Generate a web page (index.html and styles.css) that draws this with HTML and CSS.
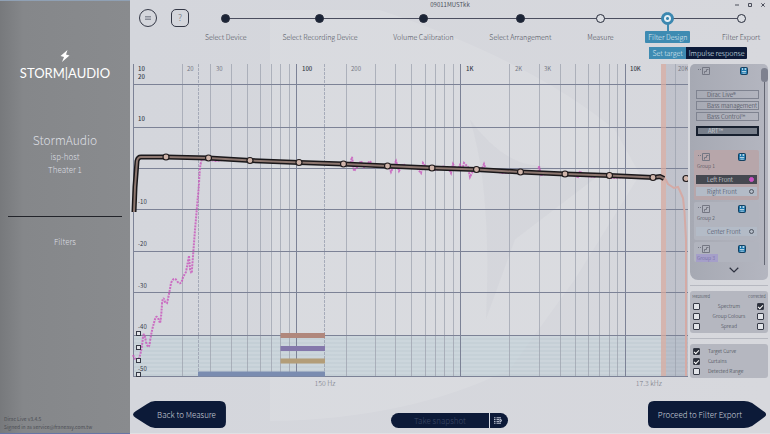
FILE: index.html
```html
<!DOCTYPE html>
<html lang="en">
<head>
<meta charset="utf-8">
<meta name="viewport" content="width=device-width, initial-scale=1">
<title>Dirac Live - Filter Design</title>
<link rel="stylesheet" href="styles.css">
</head>
<body>
<svg class="defs" aria-hidden="true">
  <symbol id="icon-link" viewBox="0 0 12 8"><path d="M0 2.500h1m1 0h1" stroke="currentColor" stroke-width="1"/><path d="M4.500.5h7v7h-7z" fill="none" stroke="currentColor" stroke-width="1"/><path d="M6.500 6.500v-2h2v-2h2" fill="none" stroke="currentColor" stroke-width="1"/></symbol>
  <symbol id="icon-save" viewBox="0 0 8 8"><rect x=".5" y=".5" width="7" height="7" rx="1" fill="#1f78ad" stroke="#17405f"/><path d="M2 1.200h1v1.600H2zM4.600 1.200h1.600v1.600H4.600zM1.800 4.200h4.400v.9H1.800zM2.400 5.800h3.400v.7H2.400z" fill="#e4eef5"/></symbol>
</svg>
<div class="app">
  <aside class="sidebar">
    <div class="brand">
      <svg class="bolt" viewBox="0 0 10 12" aria-hidden="true"><path d="M7.500 0 .5 6l3.500 1L2 12l7.500-6.500L6 4.500z" fill="#fff"/></svg>
      <span class="wordmark">STORM|AUDIO</span>
    </div>
    <div class="device">
      <h1>StormAudio</h1>
      <p>isp-host</p>
      <p>Theater 1</p>
    </div>
    <a class="side-link" href="#filters">Filters</a>
    <p class="about">Dirac Live v3.4.5<br>Signed in as service@franeasy.com.tw</p>
  </aside>

  <main class="main">
    <svg class="backdrop" viewBox="0 0 640 434" preserveAspectRatio="none" aria-hidden="true">
      <path d="M140 10h110q150 50 235 120l25 45-65 105-65 90q-100 50-240 52z" fill="#fff" opacity=".1"/>
      <path d="M340 120Q370 160 400 165L470 175 385 240 356 320Q362 190 340 120z" fill="#8d919b" opacity=".05"/>
    </svg>
    <header class="topbar">
      <div class="titlebar">
        <span class="project">09011MUSTkk</span>
        <span class="window-controls">
          <button aria-label="Minimize"><svg viewBox="0 0 6 6"><path d="M1 3h4"/></svg></button>
          <button aria-label="Maximize"><svg viewBox="0 0 6 6"><path d="M1.500 1.500h3v3h-3z"/></svg></button>
          <button aria-label="Close"><svg viewBox="0 0 6 6"><path d="m1.300 1.300 3.400 3.400m0-3.400L1.300 4.700"/></svg></button>
        </span>
      </div>
      <div class="navrow">
        <button class="round-btn" aria-label="Menu"><svg viewBox="0 0 8 8"><path d="M1 2.500h6M1 4h6M1 5.500h6" stroke="#777b88" stroke-width=".8"/></svg></button>
        <button class="square-btn" aria-label="Help">?</button>
        <ol class="steps">
          <li class="done"><i></i><a href="#device">Select Device</a></li>
          <li class="done"><i></i><a href="#recording">Select Recording Device</a></li>
          <li class="done"><i></i><a href="#volume">Volume Calibration</a></li>
          <li class="done"><i></i><a href="#arrangement">Select Arrangement</a></li>
          <li><i></i><a href="#measure">Measure</a></li>
          <li class="current"><i></i><a href="#design">Filter Design</a>
            <div class="substeps"><a href="#target">Set target</a><a class="dark" href="#impulse">Impulse response</a></div>
          </li>
          <li><i></i><a href="#export">Filter Export</a></li>
        </ol>
      </div>
    </header>

    <div class="workspace">
      <section class="chart" aria-label="Frequency response">
        <svg viewBox="130 62 558 328" role="img" aria-label="Frequency response chart">
          <defs>
            <pattern id="stripes" width="10" height="4" patternUnits="userSpaceOnUse"><path d="M0 1h10" stroke="#dbe2e7" stroke-width="1"/></pattern>
          </defs>
          <rect x="133" y="335" width="555" height="41" fill="#b9c9d2" opacity=".6"/>
          <rect x="133" y="335" width="555" height="41" fill="url(#stripes)" opacity=".6"/>
          <rect x="666" y="64" width="22" height="312" fill="#878ca1" opacity=".28"/>
          <g class="grid-minor">
            <path d="M182.500 64v312M210.500 64v312M231.500 64v312M247.500 64v312M260.500 64v312M271.500 64v312M280.500 64v312M289.500 64v312M346.500 64v312M375.500 64v312M395.500 64v312M411.500 64v312M425.500 64v312M435.500 64v312M444.500 64v312M453.500 64v312M509.500 64v312M539.500 64v312M560.500 64v312M575.500 64v312M588.500 64v312M599.500 64v312M609.500 64v312M617.500 64v312M675.500 64v312"/>
          </g>
          <path class="grid-edge" d="M198.500 64v312M324.500 64v312"/>
          <g class="grid-major">
            <path d="M133.500 64v312M296.500 64v312M460.500 64v312M625.500 64v312"/>
            <path d="M133 84.500h555M133 127.500h555M133 168.500h555M133 209.500h555M133 251.500h555M133 292.500h555M133 335.500h555M133 376.500h555"/>
          </g>
          <rect x="661" y="64" width="5" height="312" fill="#d4a99f" opacity=".75"/>
          <rect x="280.500" y="333" width="44.500" height="5" fill="#b0877c"/>
          <rect x="280.500" y="346" width="44.500" height="5" fill="#8478ab"/>
          <rect x="280.500" y="358.500" width="44.500" height="5" fill="#b39d78"/>
          <rect x="198" y="371.500" width="127" height="5" fill="#7a8cb0"/>
          <path d="M663 178L666 180 668 184 671 186 674 188 678 187 680 191 683 198 684.500 212 686 240V376" fill="none" stroke="#d4aaa5" stroke-width="2"/>
          <path class="measured" d="M133 355 Q136 362 138 360 Q141 356 143 337 Q144 330 146 342 Q149 352 150 341 Q152 329 154 323 Q156 314 158 318 L160 323 Q161 320 162 304 Q163 294 165 302 L167 303 Q169 295 171 283 Q174 276 177 281 Q181 287 183 277 L186 272 Q188 261 189 256 L190 269 Q192 277 192 269 L195 230 199 184 Q200 158 203 159 L216 161 230 159 250 161 299 163"/>
          <path class="measured" d="M343 164L350 165 352 157 354 171 358 166 361 161 364 167 370 161 374 167 380 165 389 166 391 172 396 161 399 171 403 164 408 168 411 168 417 168 421 173 423 163 427 168 437 170 444 166 449 169 451 173 453 164 457 171 460 165 462 170 464 163 468 167 470 177 474 169 481 171 484 164 486 170 495 171 502 173 507 173 515 171 538 174 539 166 541 175 546 174 556 173 572 175 578 177 580 171 584 176 594 177 600 174 612 178 625 177 636 178 650 178"/>
          <path class="target-outline" d="M134 212l1-25 2-26q1-4 4-4h25l42.500 1 42 2.500 48.500 2 44.500 1.500 44 2 44.500 2 44.500 1.500 44 2.500 44.500 2 44.500 1.500 43.500 2 7-1 4 2"/>
          <path class="target" d="M134 212l1-25 2-26q1-4 4-4h25l42.500 1 42 2.500 48.500 2 44.500 1.500 44 2 44.500 2 44.500 1.500 44 2.500 44.500 2 44.500 1.500 43.500 2 7-1 4 2"/>
          <g class="handles">
            <circle cx="166" cy="157" r="3"/><circle cx="208.500" cy="158" r="3"/><circle cx="250" cy="160.500" r="3"/><circle cx="299" cy="162.500" r="3"/><circle cx="343.500" cy="164" r="3"/><circle cx="387.500" cy="166" r="3"/><circle cx="432" cy="168" r="3"/><circle cx="476.500" cy="169.500" r="3"/><circle cx="520.500" cy="172" r="3"/><circle cx="565" cy="174" r="3"/><circle cx="609.500" cy="175.500" r="3"/><circle cx="653" cy="177.500" r="3"/><circle cx="686" cy="178.500" r="3"/>
          </g>
          <g class="tick strong">
            <text x="138" y="71">10</text><text x="302" y="71">100</text><text x="466" y="71">1K</text><text x="630" y="71">10K</text>
            <text x="138" y="79">20</text><text x="138" y="121">10</text>
          </g>
          <g class="tick">
            <text x="138" y="204">-10</text><text x="138" y="246">-20</text><text x="138" y="288">-30</text><text x="138" y="329">-40</text><text x="138" y="371">-50</text>
          </g>
          <g class="tick soft">
            <text x="187" y="71">20</text><text x="216" y="71">30</text><text x="351" y="71">200</text><text x="515" y="71">2K</text><text x="544" y="71">3K</text><text x="678" y="71">20K</text>
          </g>
          <g class="curtain-label"><text x="325" y="386" text-anchor="middle">150 Hz</text><text x="662" y="386" text-anchor="end">17.3 kHz</text></g>
        </svg>
        <div class="band-toggles">
          <input type="checkbox" aria-label="Band 1"><input type="checkbox" aria-label="Band 2"><input type="checkbox" aria-label="Band 3"><input type="checkbox" aria-label="Band 4">
        </div>
      </section>

      <aside class="panels">
        <section class="groups">
          <div class="groups-body">
            <div class="icons"><svg class="link"><use href="#icon-link"/></svg><svg class="save"><use href="#icon-save"/></svg></div>
            <div class="modes">
              <button>Dirac Live®</button>
              <button>Bass management</button>
              <button>Bass Control™</button>
              <button class="active">ART™</button>
            </div>
            <div class="group warm">
              <div class="icons"><svg class="link"><use href="#icon-link"/></svg><svg class="save"><use href="#icon-save"/></svg></div>
              <h2>Group 1</h2>
              <button class="channel selected">Left Front<i></i></button>
              <button class="channel">Right Front<i></i></button>
            </div>
            <div class="group">
              <div class="icons"><svg class="link"><use href="#icon-link"/></svg><svg class="save"><use href="#icon-save"/></svg></div>
              <h2>Group 2</h2>
              <button class="channel">Center Front<i></i></button>
            </div>
            <div class="group last">
              <div class="icons"><svg class="link"><use href="#icon-link"/></svg><svg class="save"><use href="#icon-save"/></svg></div>
              <h2 class="violet">Group 3</h2>
            </div>
            <button class="more" aria-label="Scroll down"><svg viewBox="0 0 10 6"><path d="m.7.8 4.300 4.200L9.300.8" fill="none" stroke="#2e3240" stroke-width="1.200"/></svg></button>
          </div>
          <div class="scroll"><span></span></div>
        </section>
        <hr>
        <section class="card">
          <table class="curves">
            <thead><tr><th>Measured</th><th></th><th>Corrected</th></tr></thead>
            <tbody>
              <tr><td><input type="checkbox" aria-label="Spectrum measured"></td><th>Spectrum</th><td><input type="checkbox" checked aria-label="Spectrum corrected"></td></tr>
              <tr><td><input type="checkbox" aria-label="Group Colours measured"></td><th>Group Colours</th><td><input type="checkbox" aria-label="Group Colours corrected"></td></tr>
              <tr><td><input type="checkbox" aria-label="Spread measured"></td><th>Spread</th><td><input type="checkbox" aria-label="Spread corrected"></td></tr>
            </tbody>
          </table>
        </section>
        <hr>
        <section class="card options">
          <label><input type="checkbox" checked>Target Curve</label>
          <label><input type="checkbox" checked>Curtains</label>
          <label><input type="checkbox">Detected Range</label>
        </section>
      </aside>
    </div>

    <footer class="actions">
      <button class="arrow back"><svg viewBox="0 0 93 27" preserveAspectRatio="none" aria-hidden="true"><path d="M22 0H87q6 0 6 6V21q0 6-6 6H22q-4 0-8-3L3 17q-6-3.500 0-7L14 3q4-3 8-3z" fill="#0c1a38"/></svg><span>Back to Measure</span></button>
      <div class="snapshot"><button class="take">Take snapshot</button><button class="list" aria-label="Snapshots"><svg viewBox="0 0 8 7"><path d="M0 .8h1.500M2.500.8H7M0 2.600h1.500M2.500 2.600H5M0 4.400h1.500M2.500 4.400H5M0 6.200h1.500M2.500 6.200H7M6 2l2 1.500L6 5z" stroke="#c3c9d8" stroke-width="1" fill="none"/></svg></button></div>
      <button class="arrow next"><svg viewBox="0 0 118 27" preserveAspectRatio="none" aria-hidden="true"><path d="M96 0H6Q0 0 0 6V21q0 6 6 6H96q4 0 8-2l11-8q6-3.500 0-7L104 2q-4-2-8-2z" fill="#0c1a38"/></svg><span>Proceed to Filter Export</span></button>
    </footer>
  </main>
</div>
</body>
</html>
```
FILE: styles.css
```css
* { box-sizing: border-box; margin: 0; padding: 0; }
html, body { height: 100%; }
body {
  font-family: "Noto Sans CJK SC", "Noto Sans", sans-serif;
  font-weight: 300;
  font-size: 7px;
  line-height: 10px;
  color: #4c4f5b;
  background: #d6d8de;
}
button { font: inherit; color: inherit; background: none; border: 0; cursor: pointer; }
a { color: inherit; text-decoration: none; }
svg { display: block; }
.defs { position: absolute; width: 0; height: 0; }

.app { display: grid; grid-template-columns: 130px minmax(0, 1fr); min-height: 100vh; }

/* Sidebar */
.sidebar {
  display: flex; flex-direction: column; align-items: center;
  padding: 49px 4px 0;
  color: #dcdee2;
  background: linear-gradient(90deg, #77797c, #85878a 18%, #898b8e);
  border-top: 1px solid #8fa0b4;
  border-bottom: 1px solid #6775a4;
}
.brand { display: flex; flex-direction: column; align-items: center; gap: 3px; color: #fff; }
.bolt { width: 10px; height: 12px; }
.wordmark { font-family: Lato, sans-serif; font-weight: 400; font-size: 13px; line-height: 16px; }
.device { align-self: stretch; margin: 49px 4px 0; padding-bottom: 40px; text-align: center; border-bottom: 1px solid #22242a; font-size: 8px; line-height: 13px; }
.device h1 { font-size: 12px; line-height: 20px; font-weight: 300; }
.side-link { margin-top: 19px; font-size: 8px; line-height: 12px; }
.about { align-self: stretch; margin-top: auto; font-size: 5px; line-height: 8px; color: #4c4e54; white-space: nowrap; padding-bottom: 2px; font-weight: 400; }

/* Main column */
.main { position: relative; display: flex; flex-direction: column; background: linear-gradient(90deg, #d4d6dc, #d7d8dd); border-bottom: 1px solid #e0e0e4; }
.backdrop { position: absolute; inset: 0; width: 100%; height: 100%; }
.topbar, .workspace, .actions { position: relative; }
.topbar { z-index: 1; }
.titlebar { display: grid; grid-template-columns: 1fr auto 1fr; height: 9px; align-items: center; }
.project { grid-column: 2; font-weight: 400; font-size: 6px; }
.window-controls { display: flex; justify-content: flex-end; gap: 7px; padding-right: 4px; }
.window-controls svg { width: 6px; height: 6px; fill: none; stroke: #4b4e5b; stroke-width: 1; }
.navrow { display: flex; height: 53px; padding: 0 9px; align-items: flex-start; }
.round-btn, .square-btn { display: grid; place-items: center; flex: none; width: 18px; height: 18px; border: 1px solid #343846; font-size: 9px; line-height: 12px; color: #6b6e7a; }
.round-btn { border-radius: 50%; }
.round-btn svg { width: 8px; height: 8px; }
.square-btn { margin-left: 14px; border-radius: 5px; }

.steps { display: flex; flex: 1; margin-left: 15px; list-style: none; }
.steps li { position: relative; display: flex; flex-direction: column; align-items: center; gap: 5px; flex: auto; padding: 2px 17px 0; white-space: nowrap; }
.steps li:first-child { padding-left: 0; }
.steps li:last-child { padding-right: 0; }
.steps li::before { content: ""; position: absolute; top: 9px; left: 0; right: 0; height: 1px; background: #4b4e5f; }
.steps li:first-child::before { left: calc(50% - 8px); }
.steps li:last-child::before { right: calc(50% - 8px); }
.steps i { position: relative; z-index: 1; width: 9px; height: 9px; margin: 3px 0; border: 1px solid #262b3a; border-radius: 50%; background: #dcdee3; }
.steps .done i { background: #1b2436; }
.steps a { position: relative; z-index: 1; line-height: 12px; }
.steps .current i { width: 13px; height: 13px; margin: 1px 0; border: 1px solid #3c88b0; background: radial-gradient(circle, #3c88b0 0 1px, #e5eff5 2px 3px, #3c88b0 4px 5px); }
.steps .current > a { background: #3e8bb2; color: #e3eef5; margin: 0 -4px; padding: 0 3px; border-radius: 1px; }
.steps .current::after { content: ""; position: absolute; top: 15px; bottom: 10px; left: 50%; width: 2px; margin-left: -1px; background: #3e8bb2; }
.substeps { position: absolute; top: 38px; left: 18px; display: flex; z-index: 1; color: #dfe9f1; }
.substeps a { padding: 0 3px; background: #3e8bb2; }
.substeps .dark { background: #0c1a38; border-radius: 0 1px 1px 0; }

/* Chart and panels */
.workspace { display: grid; grid-template-columns: minmax(0, 1fr) 80px; gap: 2px; align-items: start; }
.chart { position: relative; }
.chart > svg { width: 100%; height: auto; }
.grid-minor { stroke: #9ea3af; stroke-width: 1; opacity: .75; }
.grid-edge { stroke: #9aa0b0; stroke-width: 1; stroke-dasharray: 3 1; opacity: .8; }
.grid-major { stroke: #7c8296; stroke-width: 1; }
.measured { fill: none; stroke: #c95bbd; stroke-width: 2; stroke-dasharray: 2 1; opacity: .85; }
.target-outline { fill: none; stroke: #19171a; stroke-width: 5; }
.target { fill: none; stroke: #8d7770; stroke-width: 2; }
.handles { fill: #d0b5aa; stroke: #201c1e; stroke-width: 1.2; }
.tick { font-size: 6px; font-weight: 400; fill: #363a47; }
.tick.strong { font-weight: 500; }
.tick.soft { fill: #777a86; }
.curtain-label { font-size: 7px; fill: #747783; }
.band-toggles { position: absolute; left: 1%; top: 82%; height: 14%; display: flex; flex-direction: column; justify-content: space-between; }

input[type="checkbox"] { appearance: none; display: grid; place-items: center; width: 7px; height: 7px; border: 1px solid #353945; background: #e1e3e8; border-radius: 1px; }
input[type="checkbox"]:checked { background: #2b2f3a; }
input[type="checkbox"]:checked::before { content: ""; width: 4px; height: 2px; border: solid #fff; border-width: 0 0 1px 1px; transform: rotate(-45deg); }
.band-toggles input[type="checkbox"] { width: 5px; height: 5px; border-radius: 0; }

.panels { padding: 2px 2px 0 0; font-size: 6px; line-height: 8px; }
.groups { display: flex; gap: 1px; padding: 2px 0 7px 4px; background: linear-gradient(90deg, #a6a9b3, #b4b6c0); border-radius: 5px 5px 5px 8px; }
.groups-body { flex: 1; min-width: 0; }
.icons { display: grid; grid-template-columns: 1fr 1fr; align-items: center; padding: 0 0 0 4px; height: 10px; color: #747783; }
.icons .link { width: 12px; height: 8px; }
.icons .save { justify-self: center; width: 8px; height: 8px; }
.modes { display: flex; flex-direction: column; gap: 2px; padding: 14px 0 0 2px; }
.modes button { border: 1px solid #7f8390; height: 9px; line-height: 7px; padding-left: 10px; text-align: left; white-space: nowrap; color: #343848; }
.modes .active { margin-top: 3px; border: 2px solid #17202f; background: #787f8b; color: #e4e7ea; height: 10px; line-height: 6px; }
.group { margin-top: 2px; padding: 2px 2px 4px; border-radius: 2px; background: #b1b4be; }
.group .icons { padding-left: 2px; }
.group h2 { margin-bottom: 5px; font-size: 5px; line-height: 8px; font-weight: 300; padding-left: 1px; color: #3c3f4c; }
.warm { margin-top: 14px; background: #b7a6aa; }
.group.last { padding-bottom: 0; }
.group .violet { width: 22px; margin-bottom: 0; background: #a59fc9; color: #65609c; white-space: nowrap; }
.channel { display: flex; align-items: center; justify-content: space-between; width: 100%; height: 9px; padding: 0 3px 0 11px; background: #b3bbc7; color: #384156; white-space: nowrap; }
.channel + .channel { margin-top: 3px; }
.channel i { width: 5px; height: 5px; border: 1px solid #4e5560; border-radius: 50%; }
.channel.selected { background: #454850; color: #eceef1; }
.channel.selected i { background: #cc52c5; border-color: #cc52c5; }
.more { display: block; width: 100%; margin: 5px 0 0; padding-left: 14px; }
.more svg { width: 10px; height: 6px; margin: 0 auto; }
.scroll { width: 8px; display: flex; flex-direction: column; align-items: center; padding: 2px 0 8px; }
.scroll span { width: 7px; height: 14px; border-radius: 4px; background: #7e818f; }
.scroll::after { content: ""; width: 1px; flex: 1; background: #636672; }
.panels hr { border: 0; border-top: 1px solid #b6b8c0; margin: 5px 0; }
.card { padding-bottom: 2px; background: #b5b7c0; border-radius: 3px; font-size: 5px; color: #343744; }
.curves { width: 100%; border-collapse: collapse; }
.curves td, .curves th { font-weight: 300; text-align: center; height: 10px; vertical-align: middle; white-space: nowrap; }
.curves thead th { font-size: 4px; line-height: 8px; padding: 0 2px; }
.curves td:first-child { padding-left: 3px; }
.curves td:last-child input { margin-left: auto; margin-right: 4px; }
.options { padding: 2px 3px; }
.options label { display: flex; align-items: center; gap: 8px; height: 10px; white-space: nowrap; }

/* Footer */
.actions { display: grid; grid-template-columns: 1fr auto 1fr; align-items: end; margin-top: auto; padding: 0 4px 5px 3px; color: #c9ced9; }
.arrow { position: relative; height: 27px; font-size: 8px; line-height: 14px; white-space: nowrap; }
.arrow svg { position: absolute; inset: 0; width: 100%; height: 100%; }
.arrow span { position: relative; }
.back { justify-self: start; padding: 0 10px 0 24px; }
.next { justify-self: end; padding: 0 24px 0 10px; }
.snapshot { display: flex; height: 15px; border-radius: 8px; background: #0c1a38; overflow: hidden; }
.take { width: 98px; color: #3d4967; font-size: 8px; line-height: 13px; }
.list { width: 19px; border-left: 1px solid #d9dde6; display: grid; place-items: center start; padding-left: 4px; }
.list svg { width: 8px; height: 7px; }
```
